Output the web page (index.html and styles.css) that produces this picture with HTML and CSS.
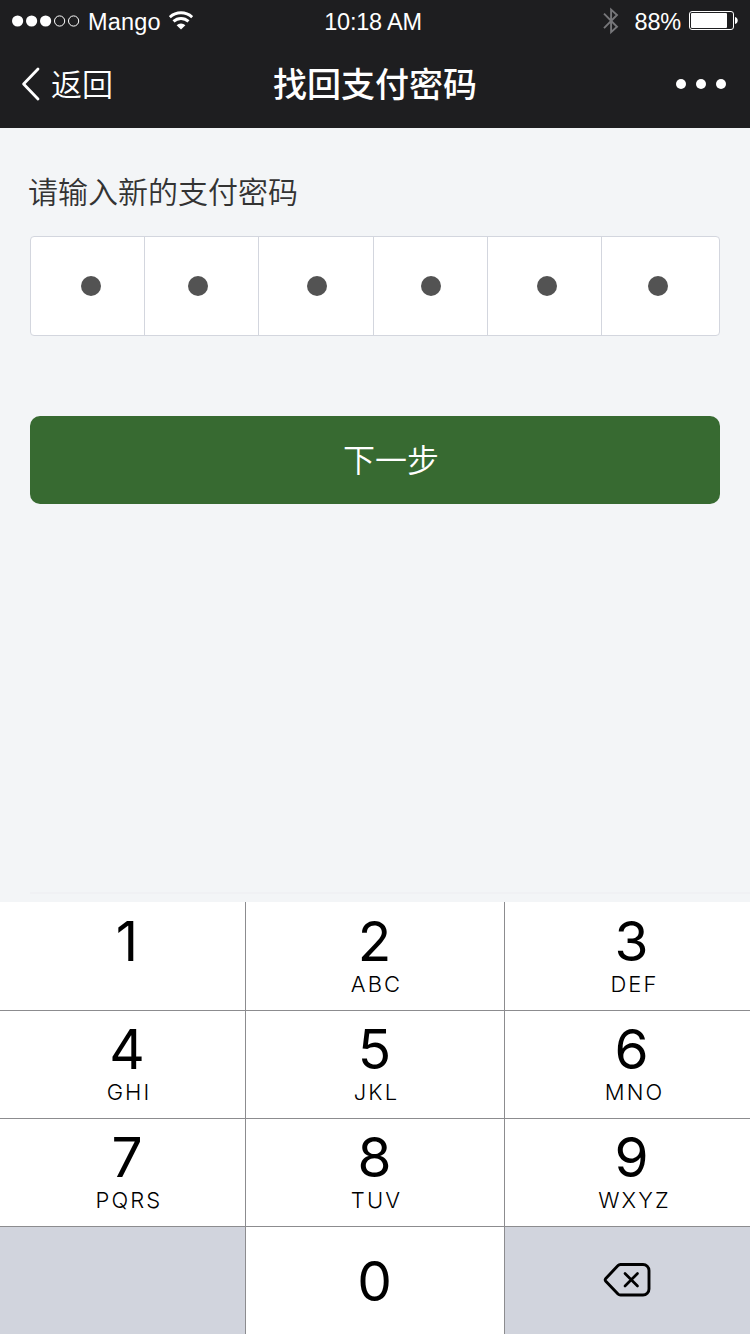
FILE: index.html
```html
<!DOCTYPE html>
<html lang="zh-CN">
<head>
<meta charset="utf-8">
<title>找回支付密码</title>
<link rel="stylesheet" href="styles.css">
</head>
<body>
<div class="screen">
  <header class="header">
    <div class="status">
      <div class="status-left">
        <svg class="signal" width="68" height="12" viewBox="0 0 68 12">
          <g fill="#fff"><circle cx="5.6" cy="6" r="5.6"/><circle cx="19.6" cy="6" r="5.6"/><circle cx="33.6" cy="6" r="5.6"/></g>
          <g fill="none" stroke="#fff"><circle cx="47.6" cy="6" r="5.1"/><circle cx="61.6" cy="6" r="5.1"/></g>
        </svg>
        <span class="carrier">Mango</span>
        <svg class="wifi" width="24" height="19" viewBox="0 0 24 19">
          <g fill="none" stroke="#fff" stroke-width="2.9"><path d="M.8 6.2a16.5 16.5 0 0 1 22.4 0"/><path d="M4.5 10.4a11 11 0 0 1 15 0"/></g>
          <path d="M7.6 14.2a6.6 6.6 0 0 1 8.8 0L12 18.6z" fill="#fff"/>
        </svg>
      </div>
      <span class="time">10:18 AM</span>
      <div class="status-right">
        <svg class="bluetooth" width="16" height="28" viewBox="0 0 16 28">
          <path d="M1 6.6L14 19.8L8.1 25.2V2.6L14 8L1 21.2" fill="none" stroke="#77777a" stroke-width="1.9"/>
        </svg>
        <span class="percent">88%</span>
        <svg class="battery" width="49" height="19" viewBox="0 0 49 19">
          <rect x=".5" y=".5" width="44" height="18" rx="2.5" fill="none" stroke="#fff"/>
          <rect x="2" y="2" width="36" height="15" rx="1" fill="#fff"/>
          <path d="M46 6c3.6.8 3.6 6.2 0 7z" fill="#fff"/>
        </svg>
      </div>
    </div>
    <nav class="nav">
      <a class="back">
        <svg width="19" height="34" viewBox="0 0 19 34"><path d="M17 2L2.6 17L17 32" fill="none" stroke="#fff" stroke-width="2.8" stroke-linecap="round" stroke-linejoin="round"/></svg>
        <span>返回</span>
      </a>
      <h1 class="title">找回支付密码</h1>
      <div class="more"><i></i><i></i><i></i></div>
    </nav>
  </header>
  <main class="content">
    <p class="prompt">请输入新的支付密码</p>
    <div class="pin">
      <div class="cell cell-1"><i></i></div>
      <div class="cell cell-2"><i></i></div>
      <div class="cell cell-3"><i></i></div>
      <div class="cell cell-4"><i></i></div>
      <div class="cell cell-5"><i></i></div>
      <div class="cell cell-6"><i></i></div>
    </div>
    <button class="next">下一步</button>
    <div class="divider"></div>
  </main>
  <div class="keypad">
    <div class="key first left"><b>1</b></div>
    <div class="key first"><b>2</b><span>ABC</span></div>
    <div class="key first right"><b>3</b><span>DEF</span></div>
    <div class="key left"><b>4</b><span>GHI</span></div>
    <div class="key"><b>5</b><span>JKL</span></div>
    <div class="key right"><b>6</b><span>MNO</span></div>
    <div class="key left"><b>7</b><span>PQRS</span></div>
    <div class="key"><b>8</b><span>TUV</span></div>
    <div class="key right"><b>9</b><span>WXYZ</span></div>
    <div class="key left blank"></div>
    <div class="key zero"><b>0</b></div>
    <div class="key right delete">
      <svg width="48" height="36" viewBox="0 0 48 36" fill="none" stroke="#000" stroke-linecap="round" stroke-linejoin="round">
        <path d="M17.5 2.5H40a6 6 0 0 1 6 6V27a6 6 0 0 1-6 6H17.5Q16 33 15 32L2.8 19.2Q1.6 17.8 2.8 16.4L15 3.6Q16 2.5 17.5 2.5Z" stroke-width="2.9"/>
        <path d="M22 11.5L34.5 24M34.5 11.5L22 24" stroke-width="2.7"/>
      </svg>
    </div>
  </div>
</div>
</body>
</html>
```
FILE: styles.css
```css
* { box-sizing: border-box; }
body { margin: 0; font-family: "Noto Sans CJK SC", sans-serif; }
i { display: block; border-radius: 50%; }
svg { display: block; flex: none; }

.screen { width: 750px; height: 1334px; display: flex; flex-direction: column; background: #f3f5f7; overflow: hidden; }
.header { height: 128px; flex: none; background: #1e1e20; color: #fff; }

.status { height: 40px; display: grid; grid-template-columns: 1fr auto 1fr; padding: 0 12px; font: 23.5px/44px "Liberation Sans", Arial, sans-serif; }
.status-left, .status-right { display: flex; align-items: center; height: 41px; }
.status-left span, .status-right span { padding-top: 2px; }
.status-right { justify-content: flex-end; }
.carrier { margin-left: 8px; letter-spacing: .2px; }
.wifi { margin-left: 8px; }
.time { letter-spacing: -.2px; margin-right: 4px; }
.percent { margin: 0 8px 0 16px; letter-spacing: -.2px; }

.nav { height: 88px; display: grid; grid-template-columns: 1fr auto 1fr; align-items: center; padding: 0 24px 0 21px; }
.back { display: flex; align-items: center; gap: 11px; font-size: 31px; font-weight: 350; }
.back span { height: 88px; line-height: 85px; }
.title { margin: 0 -1.5px 0 1.5px; height: 88px; font-size: 34px; font-weight: 500; line-height: 86px; }
.more { display: flex; gap: 10px; justify-content: flex-end; }
.more i { width: 10px; height: 10px; background: #fff; }

.content { flex: 1; display: flex; flex-direction: column; padding: 40px 30px 0; }
.prompt { margin: 0 0 24px -2px; font-size: 30px; font-weight: 350; line-height: 44px; color: #333; }
.pin { height: 100px; display: grid; grid-template-columns: 114px 114px 115px 114px 114px 117px; background: #fff; border: 1px solid #d3d6de; border-radius: 4px; }
.cell { display: flex; align-items: center; border-right: 1px solid #d3d6de; }
.cell i { width: 20px; height: 20px; background: #535353; }
.cell-1 { padding-left: 50px; }
.cell-2 { padding-left: 43px; }
.cell-3 { padding-left: 48px; }
.cell-4 { padding-left: 47px; }
.cell-5 { padding-left: 49px; }
.cell-6 { padding-left: 46px; border-right: 0; }
.next { height: 88px; margin-top: 80px; padding: 0 0 4px 32px; border: 0; border-radius: 10px; background: #376a31; color: #fff; font: 350 32px/84px "Noto Sans CJK SC", sans-serif; }
.divider { height: 2px; margin: auto -30px 8px 0; background: #f0f1f4; }

.keypad { flex: none; display: grid; grid-template-columns: 246px 259px 245px; grid-template-rows: 109px 108px 108px 107px; background: #fff; color: #000; font-family: Inter, sans-serif; }
.key { display: flex; flex-direction: column; align-items: center; padding-top: 10px; padding-right: 1px; border-right: 1px solid #8c8c8f; border-bottom: 1px solid #8c8c8f; }
.first { padding-top: 11px; }
.left { padding-left: 10px; }
.right { padding-left: 9px; border-right: 0; }
.key b { font-size: 55px; font-weight: 400; line-height: 56px; }
.key span { margin-top: 1px; padding-left: 4px; font-size: 22px; font-weight: 350; line-height: 28px; letter-spacing: 2.1px; }
.right span { padding-left: 6px; }
.blank, .delete { background: #d1d4dd; }
.blank, .zero, .delete { border-bottom: 0; }
.zero { padding-top: 26px; }
.delete { padding: 35px 2px 0 0; }
```
